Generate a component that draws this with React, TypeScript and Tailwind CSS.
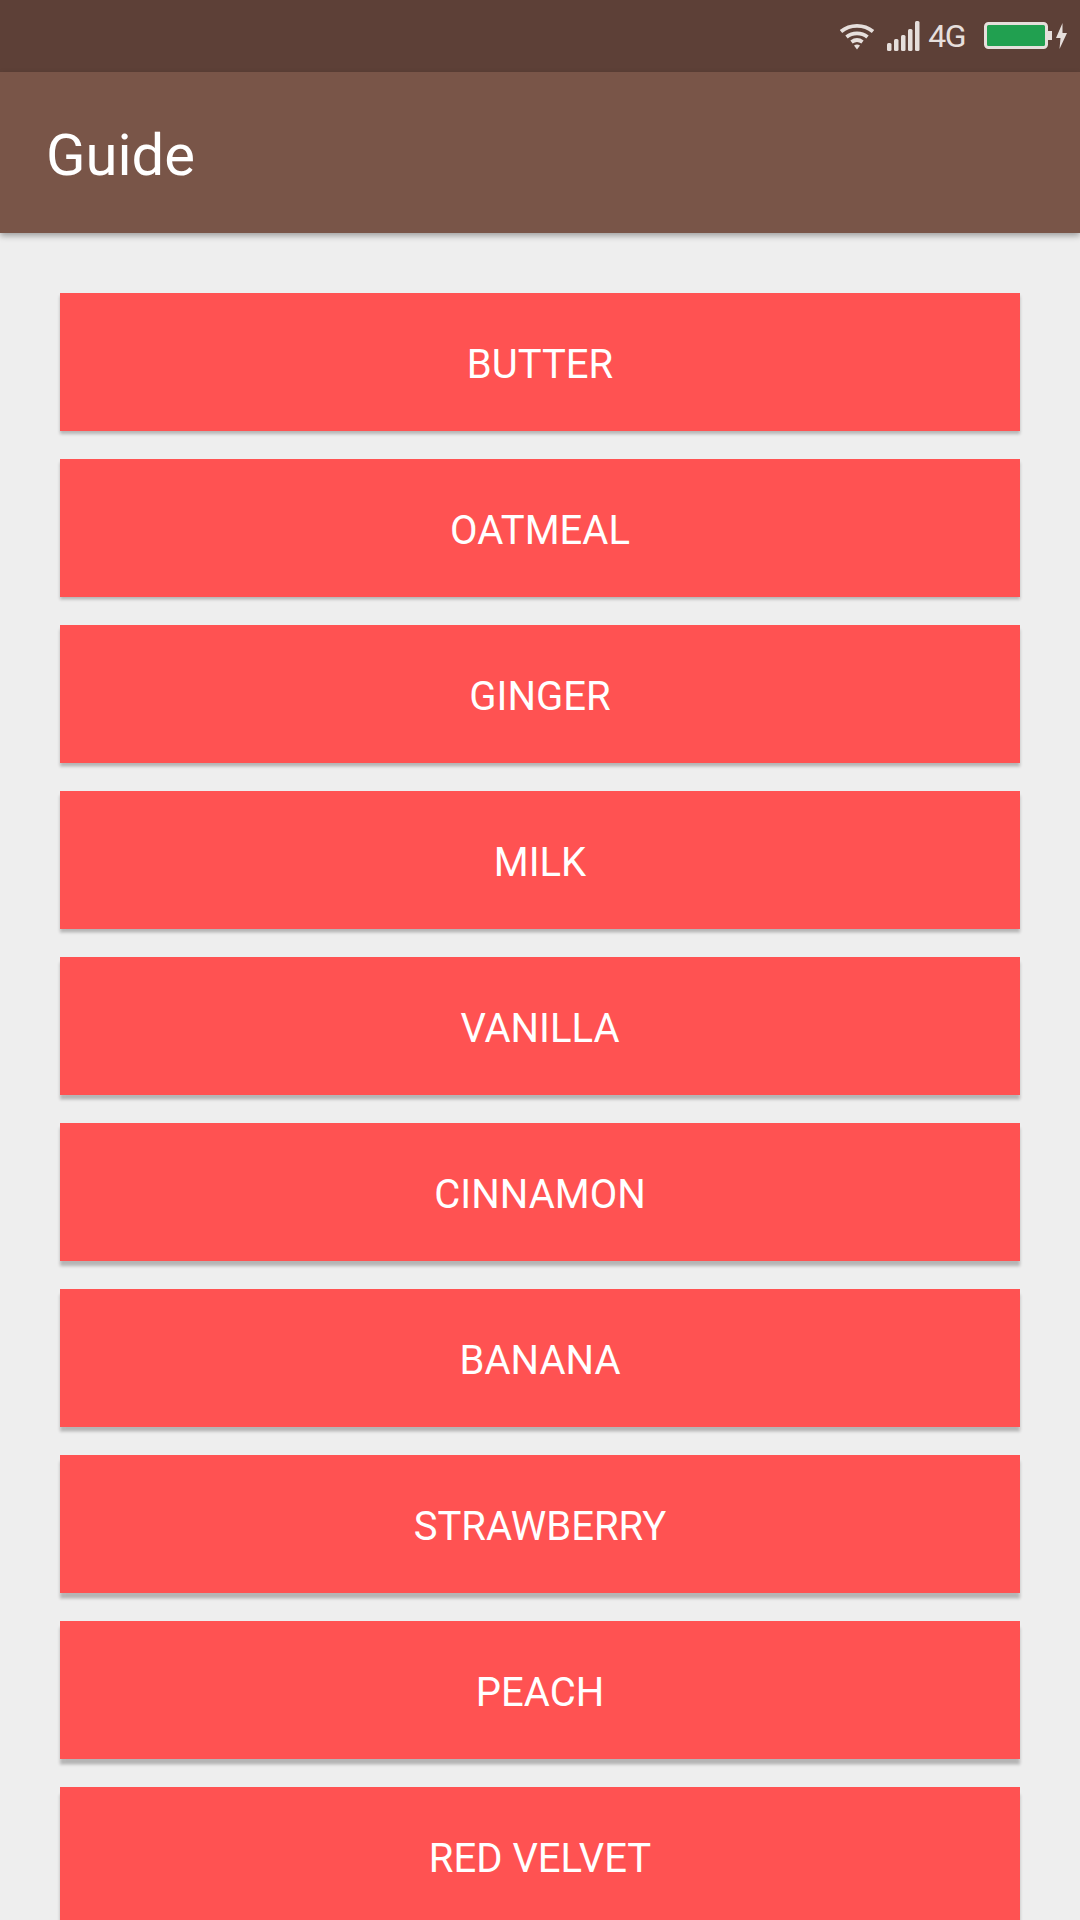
import React from 'react';

const flavors = ['BUTTER', 'OATMEAL', 'GINGER', 'MILK', 'VANILLA', 'CINNAMON', 'BANANA', 'STRAWBERRY', 'PEACH', 'RED VELVET'];

const StatusIcons: React.FC = () => (
    <div className="flex items-center justify-end h-[72px] bg-[#5d4037] pr-[13px] shrink-0">
        {/* wifi */}
        <svg width="36" height="28" viewBox="0 0 36 28" fill="none" stroke="#e6dfdc" strokeWidth="3.8" className="mr-[12px]">
            <path d="M2 9.5C11 2 25 2 34 9.5" />
            <path d="M7.5 15C13.5 10.2 22.5 10.2 28.5 15" />
            <path d="M12.5 20C15.8 17.6 20.2 17.6 23.5 20" />
            <path d="M15 23.5L18 27.5L21 23.5C19 22.2 17 22.2 15 23.5Z" fill="#e6dfdc" stroke="none" />
        </svg>
        {/* signal */}
        <svg width="34" height="30" viewBox="0 0 34 30" fill="#e6dfdc" className="mr-[7px]">
            <rect x="0" y="22" width="4.5" height="8" rx="1.5" />
            <rect x="7" y="18" width="4.5" height="12" rx="1.5" />
            <rect x="14" y="14" width="4.5" height="16" rx="1.5" />
            <rect x="21" y="8" width="4.5" height="22" rx="1.5" />
            <rect x="28" y="0" width="4.5" height="30" rx="1.5" />
        </svg>
        <span className="font-['Roboto',sans-serif] text-[32px] leading-none tracking-[-1.5px] text-[#e6dfdc] mr-[19px]">4G</span>
        {/* battery */}
        <svg width="68" height="28" viewBox="0 0 68 28" className="mr-[4px]">
            <rect x="1.5" y="1.5" width="61" height="24" rx="3" fill="#21a050" stroke="#e6dfdc" strokeWidth="3" />
            <rect x="64" y="9" width="4" height="9" fill="#e6dfdc" />
        </svg>
        {/* charging bolt */}
        <svg width="11" height="26" viewBox="0 0 11 26" fill="#e6dfdc">
            <path d="M6.5 0L0 15H4.5L3.5 26L11 10H6.5Z" />
        </svg>
    </div>
);

export default function App() {
    return (
        <div className="flex flex-col w-[1080px] h-[1920px] overflow-hidden bg-[#eeeeee] font-['Roboto',sans-serif]">
            <StatusIcons />

            {/* App bar */}
            <div className="relative z-10 flex items-center h-[161px] shrink-0 bg-[#795548] pl-[46px] pt-[5px] shadow-[0_3px_6px_rgba(0,0,0,0.32)]">
                <h1 className="text-[58px] leading-none text-white">Guide</h1>
            </div>

            {/* Flavor list, the shadow gets longer further down the screen */}
            <div className="flex flex-col gap-[28px] px-[60px] pt-[60px]">
                {flavors.map((name, idx) => (
                    <button
                        key={name}
                        className="flex items-center justify-center h-[138px] shrink-0 pt-[5px] bg-[#ff5252] text-white text-[40px] leading-none"
                        style={{ boxShadow: `0 ${3 + idx * 0.4}px 3px rgba(0,0,0,0.24)` }}
                    >
                        {name}
                    </button>
                ))}
            </div>
        </div>
    );
}
